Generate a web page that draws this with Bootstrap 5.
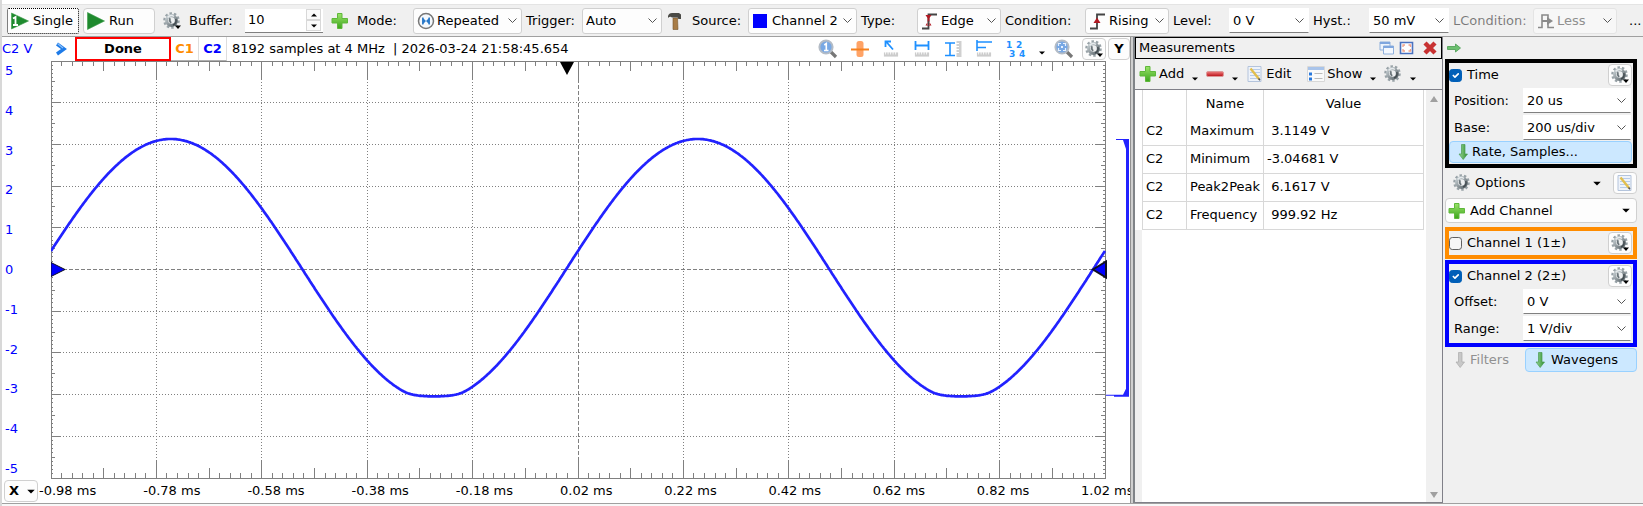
<!DOCTYPE html>
<html lang="en">
<head>
<meta charset="utf-8">
<meta name="viewport" content="width=device-width, initial-scale=1">
<title>Scope</title>
<link href="https://cdn.jsdelivr.net/npm/bootstrap@5.3.0/dist/css/bootstrap.min.css" rel="stylesheet">
<style>
  body { font: 13px/20px Verdana, "DejaVu Sans", sans-serif; color: #000; background: #f0f0f0; }
  svg { display: block; flex: none; }
  .ico { width: 18px; height: 18px; }
  .app { border-left: 2px solid #d8d8d8; }
  .topstrip { height: 5px; background: #fff; border-bottom: 1px solid #e4e4e4; }
  .toolbar { height: 32px; gap: 4px; padding: 0 0 0 5px; border-bottom: 1px solid #a0a0a0; }
  .toolbar > * { flex: none; }
  .cap { width: 52px; }
  .cap-wide { width: 76px; }
  .btn { --bs-btn-padding-x: 4px; --bs-btn-padding-y: 0; --bs-btn-font-size: 13px; --bs-btn-line-height: 20px;
         --bs-btn-border-radius: 4px; --bs-btn-color: #000; display: flex; align-items: center; gap: 4px; white-space: nowrap; }
  .btn-face { --bs-btn-bg: #fdfdfd; --bs-btn-border-color: #d0d0d0; }
  .btn-on { --bs-btn-bg: #cce8ff; --bs-btn-border-color: #99d1ff; }
  .btn-run { width: 72px; height: 26px; --bs-btn-padding-x: 3px; }
  .btn-single { --bs-btn-border-color: #000; --bs-btn-border-radius: 2px; border-style: dotted; }
  .btn:disabled { --bs-btn-disabled-color: #909090; --bs-btn-disabled-opacity: 1; --bs-btn-disabled-border-color: transparent; }
  .btn-sq { width: 24px; height: 22px; padding: 0; justify-content: center; }
  .combo { display: grid; align-items: center; }
  .combo > * { grid-area: 1 / 1; }
  .combo > svg { margin-left: 4px; z-index: 1; pointer-events: none; }
  .form-select { font-size: 13px; line-height: 20px; padding: 0 16px 0 3px; height: 26px; color: #000; border: 1px solid #d0d0d0;
    border-radius: 3px; background-color: #fdfdfd; background-size: 9px 9px; background-position: right 4px center;
    background-image: url("data:image/svg+xml,%3csvg xmlns='http://www.w3.org/2000/svg' viewBox='0 0 9 9'%3e%3cpath d='M0.5 2.5l4 4 4-4' fill='none' stroke='%23555'/%3e%3c/svg%3e"); }
  .with-ico { padding-left: 23px; }
  .flat { border-color: #fff #fff #808080; border-radius: 0; background-color: #fff; height: 25px; }
  .form-select:disabled { color: #909090; background-color: #f7f7f7; border-color: #e4e4e4; }
  .w-l { width: 109px; } .w-m { width: 80px; } .w-s { width: 84px; }
  .spin { width: 78px; height: 24px; background: #fff; border-bottom: 1px solid #808080; }
  .spin input { width: 61px; border: 0; padding: 0 3px; background: none; font-size: 13px; }
  .spin button { width: 15px; height: 11px; padding: 0; border: 1px solid #d8d8d8; background: #fafafa; display: flex; align-items: center; justify-content: center; }
  .plotpane { background: #fff; min-width: 0; }
  .infobar { height: 24px; }
  .blue { color: #00f; }
  .done { width: 96px; height: 24px; border: 2px solid #f00; text-align: center; font-weight: 700; }
  .chip { width: 28px; height: 24px; border: 0; border-right: 1px solid #ddd; border-bottom: 1px solid #b0b0b0; padding: 0; background: #fff; font-weight: 700; }
  .chip-c1 { color: #ff8c00; }
  .status { white-space: pre; padding-left: 5px; }
  .tools { gap: 13px; }
  .tools .drop { align-self: flex-end; margin: 0 -4px 4px 0; }
  .btn-y { width: 22px; margin-left: 2px; font-weight: 700; }
  .ylabels { width: 49px; padding: 0 0 0 3px; }
  .xrow { height: 24px; }
  .xbtn { width: 34px; height: 22px; margin: 0 1px 0 2px; font-weight: 700; }
  .xlabels span { flex: 1 1 0; min-width: 0; white-space: nowrap; }
  .xlabels span:last-child { flex: 0 0 49px; overflow: hidden; }
  #scope { width: 100%; height: 100%; overflow: hidden; }
  .split { width: 3px; background: #d0d0d0; border-left: 1px solid #909090; }
  .measure { width: 310px; border-left: 2px solid #808488; border-right: 1px solid #808088; background: #f0f0f0; }
  .mtitle { height: 22px; border: 1px solid #000; padding: 0 4px 0 3px; }
  .mtools { height: 30px; }
  .mtools .btn { --bs-btn-padding-x: 0; border: 0; gap: 2px; height: 24px; }
  .mbody { border-top: 1px solid #808088; border-bottom: 1px solid #808088; background: #fff; }
  .gutter { width: 7px; background: #f0f0f0; border-top: 140px solid #fff; }
  .table { --bs-table-bg: #fff; --bs-table-color: #000; width: 282px; table-layout: fixed; margin: 0; }
  .table th, .table td { border-color: #d8d8d8; vertical-align: middle; height: 28px; }
  .table th { height: 27px; padding: 0; text-align: center; font-weight: 400; border-width: 0 1px; }
  .table td { padding: 0 3px; border-width: 0 1px 1px; white-space: pre; }
  .table thead, .table tbody { border: 0; }
  .scrollcol { width: 16px; background: #f0f0f0; padding: 6px 0 4px; }
  .side { width: 200px; padding: 0 6px 0 2px; }
  .sidehead { height: 22px; padding-left: 2px; }
  .box { border: 4px solid #000; padding: 0 1px 1px 0; }
  .box-o { border-color: #ff8c00; padding: 0 1px 0 0; margin-bottom: 1px; }
  .box-b { border-color: #00f; margin-bottom: 1px; }
  .form-check-input { width: 13px; height: 13px; margin: 0; border-color: #606060; border-radius: 3px; background-color: #f6f6f6; }
  .form-check-input:checked { background-color: #005fb8; border-color: #005fb8; }
  .headrow { height: 24px; }
  .headrow label { padding-left: 5px; }
  .field { height: 27px; }
  .field label { width: 74px; padding-left: 5px; }
  .field .form-select { width: 108px; }
  .addch { height: 25px; gap: 0; --bs-btn-padding-x: 2px; }
  .filters { height: 24px; padding-left: 10px; gap: 5px; }
  .wavegens { width: 112px; height: 24px; padding-left: 9px; gap: 6px; }
  .foot { height: 3px; background: #f8f8f8; border-top: 1px solid #a0a0a0; }
</style>
</head>
<body>
<svg width="0" height="0" class="position-absolute" aria-hidden="true">
  <defs>
    <linearGradient id="gGreen" x2="0" y2="1"><stop stop-color="#9be36a"/><stop offset="1" stop-color="#3ba51c"/></linearGradient>
    <linearGradient id="gRed" x2="0" y2="1"><stop stop-color="#f08080"/><stop offset="1" stop-color="#b80d14"/></linearGradient>
    <linearGradient id="gGear" x2="1" y2="1"><stop stop-color="#c8d0d4"/><stop offset="1" stop-color="#5c666b"/></linearGradient>
    <linearGradient id="gArrow"><stop stop-color="#9ad89a"/><stop offset="1" stop-color="#2f8f2f"/></linearGradient>
  </defs>
  <symbol id="play" viewBox="0 0 18 18"><path d="M.5 .5L17.500 9L.5 17.500z" fill="#1e8a2e" stroke="#3a9a48" stroke-width=".6"/></symbol>
  <symbol id="single" viewBox="0 0 18 18"><path d="M.5 1L17.500 9L.5 17z" fill="#1e8a2e" stroke="#3a9a48" stroke-width=".6"/><path d="M2 6.500L4.500 5V13M2 13H7" fill="none" stroke="#fff" stroke-width="1.800"/></symbol>
  <symbol id="gear" viewBox="0 0 18 18">
    <circle cx="8.500" cy="8.500" r="7" fill="none" stroke="#98a2a7" stroke-width="2.600" stroke-dasharray="2.400 2"/>
    <circle cx="8.500" cy="8.500" r="4.900" fill="#eef0f1" stroke="url(#gGear)" stroke-width="3.200"/>
    <path d="M4.600 5.500A5 5 0 0 1 11 4.500" fill="none" stroke="#e6eaec" stroke-width="1.400"/>
    <path d="M7 6.200Q6 8.500 8 11" fill="none" stroke="#6b757a" stroke-width="1.800"/>
    <path d="M12.800 7A5 5 0 0 1 10 13" fill="none" stroke="#434b50" stroke-width="1.400"/>
  </symbol>
  <symbol id="geardd" viewBox="0 0 18 18"><use href="#gear" width="18" height="18"/><path d="M12 13.500H18L15 17z"/></symbol>
  <symbol id="plus" viewBox="0 0 18 18"><path d="M6.500 1.500h4.500v5h5.500v4.500h-5.500v5.500h-4.500v-5.500h-5.500v-4.500h5.500z" fill="url(#gGreen)" stroke="#5fb83a"/></symbol>
  <symbol id="minus" viewBox="0 0 18 18"><rect x=".5" y="6.500" width="17" height="5" rx="1.500" fill="url(#gRed)" stroke="#d99"/></symbol>
  <symbol id="rep" viewBox="0 0 18 18"><circle cx="9" cy="9" r="7.500" fill="#f4f8fc" stroke="#777" stroke-width="1.500"/><path d="M5.800 5.500v7M12.200 5.500v7" stroke="#2878c8" stroke-width="1.500"/><path d="M6 6l3 3-3 3zM12 6l-3 3 3 3z" fill="#2878c8"/></symbol>
  <symbol id="hammer" viewBox="0 0 18 18"><path d="M7 6h4.500l.5 11.500h-5z" fill="#a87c46" stroke="#76552c" stroke-width=".6"/><path d="M2 4Q3 .5 7 1H13L15 2.500V7H12.500L11.500 5.500H6Q4 4 2 6z" fill="#4a4a46"/></symbol>
  <symbol id="edge" viewBox="0 0 18 18"><path d="M1 16.500H7.500V2.500H16" fill="none" stroke="#444" stroke-width="1.800"/><path d="M4.500 3h6L7.500 7.500zM4.500 13.500h6L7.500 8.500zM6.500 4h2v9h-2z" fill="#b01822"/></symbol>
  <symbol id="rising" viewBox="0 0 18 18"><path d="M1 16.500H8V2.500H16" fill="none" stroke="#444" stroke-width="1.800"/><path d="M4.500 11L8 5.500 11.500 11z" fill="#b01822"/></symbol>
  <symbol id="less" viewBox="0 0 18 18"><path d="M1 15.500H5V3H11V15.500H17" fill="none" stroke="#8a8a8a" stroke-width="1.600"/><path d="M5 8h5V5l6 4-6 4v-3H5z" fill="#8a8a8a"/></symbol>
  <symbol id="mag" viewBox="0 0 20 20"><path d="M12.500 12.500L18 18" stroke="#777" stroke-width="3.200"/><circle cx="8" cy="8" r="6.600" fill="#78a8e4" stroke="#b4bcc6" stroke-width="2"/></symbol>
  <symbol id="mag1" viewBox="0 0 20 20"><use href="#mag" width="20" height="20"/><path d="M6.300 6L8.300 4.500V11.500M6 11.500H10.500" fill="none" stroke="#fff" stroke-width="1.600"/></symbol>
  <symbol id="magfit" viewBox="0 0 20 20"><use href="#mag" width="20" height="20"/><path d="M4.500 7V4.500H7M9 4.500H11.500V7M11.500 9V11.500H9M7 11.500H4.500V9" fill="none" stroke="#e8f2ff" stroke-width="1.200"/><path d="M7 7h2v2h-2z" fill="#e8f2ff"/></symbol>
  <symbol id="hot" viewBox="0 0 18 18"><rect x="5.500" y="1" width="7" height="16" rx="2.500" fill="#ffa366"/><path d="M0 9.500H18" stroke="#f58220" stroke-width="2"/></symbol>
  <symbol id="ruler" viewBox="0 0 18 6"><rect x=".5" y=".5" width="17" height="5" fill="#ccc"/><path d="M2.500 0v3M5.500 0v3M8.500 0v3M11.500 0v3M14.500 0v3" stroke="#fff"/></symbol>
  <symbol id="curs" viewBox="0 0 18 18"><use href="#ruler" x="1" y="12" width="16" height="5"/><path d="M4 1.500L11 9.500M3.500 7V1.500H9" fill="none" stroke="#1e90ff" stroke-width="1.800"/></symbol>
  <symbol id="hcur" viewBox="0 0 18 18"><use href="#ruler" x="1" y="12" width="16" height="5"/><path d="M2.500 1V10M15.500 1V10M3 5.500H15" fill="none" stroke="#1e90ff" stroke-width="1.800"/></symbol>
  <symbol id="vcur" viewBox="0 0 18 18"><path d="M12.500 1h5v16h-5z" fill="#d0d0d0"/><path d="M12 3.500h3M12 6.500h3M12 9.500h3M12 12.500h3" stroke="#fff"/><path d="M1 3H11M1 15.500H11M6 3V15" fill="none" stroke="#1e90ff" stroke-width="1.600"/></symbol>
  <symbol id="lev" viewBox="0 0 18 18"><use href="#ruler" x="1" y="12" width="16" height="5"/><path d="M2 0V11M2 2H17M2 7.500H11" fill="none" stroke="#1e90ff" stroke-width="1.600"/></symbol>
  <symbol id="caret" viewBox="0 0 6 4"><path d="M0 .5H6L3 3.500z"/></symbol>
  <symbol id="note" viewBox="0 0 18 18"><path d="M2 1.500h13v15h-13z" fill="#eef3fa" stroke="#b4c4dc"/><path d="M4 4.500h10M4 7.500h10M4 10.500h10M4 13.500h10" stroke="#b8cce8"/><path d="M4.500 3.500L13 14" stroke="#e2bf4e" stroke-width="2.400"/><path d="M12.500 13.500l1.500 1.700" stroke="#555" stroke-width="1.500"/></symbol>
  <symbol id="list" viewBox="0 0 18 18"><path d="M.5 1.500h17v15h-17z" fill="#fafafa" stroke="#d8d8d8"/><path d="M1 2h16v3H1z" fill="#a9c4ea"/><path d="M2 7.500h3v3H2zM2 12.500h3v3H2z" fill="#2878dc"/><path d="M7.500 8.500h8M7.500 13.500h8" stroke="#bbb"/></symbol>
  <symbol id="wins" viewBox="0 0 16 14"><path d="M1 1h10v8H1z" fill="#eef4fc" stroke="#8fb0dc"/><path d="M1 1h10v2H1z" fill="#7fa6de"/><path d="M4.500 5h10v8h-10z" fill="#f4f8fe" stroke="#8fb0dc"/><path d="M4.500 5h10v2h-10z" fill="#7fa6de"/></symbol>
  <symbol id="maxi" viewBox="0 0 16 14"><path d="M1.500 1.500h12v11h-12z" fill="#fff" stroke="#4a72c0" stroke-width="1.600"/><path d="M4 6V4h2M9.500 4h2v2M11.500 8v2h-2M6 10H4V8" fill="none" stroke="#f0a088" stroke-width="1.300"/></symbol>
  <symbol id="cross" viewBox="0 0 14 14"><path d="M2 2L12 12M12 2L2 12" stroke="#c83232" stroke-width="4.400"/></symbol>
  <symbol id="right" viewBox="0 0 14 10"><path d="M.5 3.500h8v-2.500l5 4-5 4v-2.500h-8z" fill="#6cc070" stroke="#4a9c50" stroke-width=".8"/></symbol>
  <symbol id="down" viewBox="0 0 10 18"><path d="M3.500 1.500h3.500v9.500h2.500l-4.300 5.500-4.200-5.500h2.500z" fill="url(#gArrow)" stroke="#4a9c50" stroke-width=".7"/></symbol>
  <symbol id="downoff" viewBox="0 0 10 18"><path d="M3.500 1.500h3.500v9.500h2.500l-4.300 5.500-4.200-5.500h2.500z" fill="#c8c8c8" stroke="#aaa" stroke-width=".7"/></symbol>
  <symbol id="chev" viewBox="0 0 12 14"><path d="M2 2L9 7L2 12" fill="none" stroke="#1e7be8" stroke-width="3.400"/><path d="M2.500 1.500L8 6" stroke="#8cc0f8" stroke-width="1.200"/></symbol>
</svg>

<div class="app vh-100 d-flex flex-column overflow-hidden">
  <div class="topstrip flex-shrink-0"></div>
  <header class="toolbar d-flex align-items-center flex-shrink-0 overflow-hidden">
    <button class="btn btn-face btn-run btn-single"><svg class="ico"><use href="#single"/></svg>Single</button>
    <button class="btn btn-face btn-run"><svg class="ico"><use href="#play"/></svg>Run</button>
    <button class="btn p-0 border-0 ms-1" aria-label="Settings"><svg class="ico"><use href="#geardd"/></svg></button>
    <label for="buf" class="cap ms-1">Buffer:</label>
    <div class="spin d-flex align-items-center"><input id="buf" type="text" value="10">
      <div><button aria-label="Up"><svg width="6" height="4" viewBox="0 0 6 4"><path d="M0 3.500H6L3 .5z"/></svg></button><button aria-label="Down"><svg width="6" height="4"><use href="#caret"/></svg></button></div></div>
    <button class="btn p-0 border-0 ms-1 me-1" aria-label="Add"><svg class="ico"><use href="#plus"/></svg></button>
    <label for="mode" class="cap">Mode:</label>
    <div class="combo w-l"><svg class="ico"><use href="#rep"/></svg><select id="mode" class="form-select with-ico"><option>Repeated</option></select></div>
    <label for="trig" class="cap">Trigger:</label>
    <select id="trig" class="form-select w-m"><option>Auto</option></select>
    <button class="btn p-0 border-0 me-1" aria-label="Tools"><svg class="ico"><use href="#hammer"/></svg></button>
    <label for="src" class="cap">Source:</label>
    <div class="combo w-l"><svg width="18" height="18" viewBox="0 0 18 18"><path d="M1 2h14v14H1z" fill="#00f"/></svg><select id="src" class="form-select with-ico"><option>Channel 2</option></select></div>
    <label for="type" class="cap">Type:</label>
    <div class="combo w-s"><svg class="ico"><use href="#edge"/></svg><select id="type" class="form-select with-ico"><option>Edge</option></select></div>
    <label for="cond" class="cap-wide">Condition:</label>
    <div class="combo w-s"><svg class="ico"><use href="#rising"/></svg><select id="cond" class="form-select with-ico"><option>Rising</option></select></div>
    <label for="lvl" class="cap">Level:</label>
    <select id="lvl" class="form-select flat w-m"><option>0 V</option></select>
    <label for="hyst" class="cap">Hyst.:</label>
    <select id="hyst" class="form-select flat w-m"><option>50 mV</option></select>
    <label for="lc" class="cap-wide text-black-50">LCondition:</label>
    <div class="combo w-s"><svg class="ico"><use href="#less"/></svg><select id="lc" class="form-select with-ico" disabled><option>Less</option></select></div>
    <span class="ms-2">...</span>
  </header>

  <main class="d-flex flex-grow-1 overflow-hidden">
    <section class="plotpane d-flex flex-column flex-grow-1">
      <div class="infobar d-flex align-items-center flex-shrink-0">
        <span class="blue ylabels ps-0 ms-0">C2 V</span>
        <button class="btn p-0 border-0 ms-1 me-2" aria-label="Expand"><svg width="12" height="14"><use href="#chev"/></svg></button>
        <div class="done">Done</div>
        <button class="chip chip-c1">C1</button>
        <button class="chip blue">C2</button>
        <span class="status">8192 samples at 4 MHz  | 2026-03-24 21:58:45.654</span>
        <div class="tools d-flex align-items-center ms-auto">
          <svg width="20" height="20"><use href="#mag1"/></svg>
          <svg class="ico"><use href="#hot"/></svg>
          <svg class="ico"><use href="#curs"/></svg>
          <svg class="ico"><use href="#hcur"/></svg>
          <svg class="ico"><use href="#vcur"/></svg>
          <svg class="ico"><use href="#lev"/></svg>
          <svg width="20" height="18" viewBox="0 0 20 18" fill="#1e90ff" font-size="9" font-weight="700"><text x="0" y="8">1</text><text x="10" y="8">2</text><text x="3" y="17">3</text><text x="13" y="17">4</text></svg>
          <svg class="drop" width="6" height="4"><use href="#caret"/></svg>
          <svg width="20" height="20"><use href="#magfit"/></svg>
        </div>
        <button class="btn btn-face btn-sq ms-2" aria-label="Plot settings"><svg class="ico"><use href="#geardd"/></svg></button>
        <button class="btn btn-face btn-sq btn-y">Y</button>
      </div>
      <div class="d-flex flex-grow-1 overflow-hidden">
        <div class="ylabels blue d-flex flex-column justify-content-between flex-shrink-0">
          <span>5</span><span>4</span><span>3</span><span>2</span><span>1</span><span>0</span><span>-1</span><span>-2</span><span>-3</span><span>-4</span><span>-5</span>
        </div>
        <div class="flex-grow-1 overflow-hidden"><svg id="scope" role="img" aria-label="Channel 2 waveform"></svg></div>
      </div>
      <div class="xrow d-flex align-items-center flex-shrink-0">
        <button class="btn btn-face xbtn"><span>X</span><span class="vr"></span><svg width="8" height="5"><use href="#caret"/></svg></button>
        <div class="xlabels d-flex flex-grow-1">
          <span>-0.98 ms</span><span>-0.78 ms</span><span>-0.58 ms</span><span>-0.38 ms</span><span>-0.18 ms</span><span>0.02 ms</span><span>0.22 ms</span><span>0.42 ms</span><span>0.62 ms</span><span>0.82 ms</span><span>1.02 ms</span>
        </div>
      </div>
    </section>
    <div class="split flex-shrink-0"></div>

    <section class="measure d-flex flex-column flex-shrink-0">
      <div class="mtitle d-flex align-items-center">Measurements
        <svg class="ms-auto" width="16" height="14"><use href="#wins"/></svg>
        <svg class="mx-1" width="16" height="14"><use href="#maxi"/></svg>
        <svg class="ms-1" width="14" height="14"><use href="#cross"/></svg>
      </div>
      <div class="mtools d-flex align-items-center">
        <button class="btn ms-1"><svg class="ico"><use href="#plus"/></svg>Add</button>
        <svg class="align-self-end mb-2 ms-2" width="6" height="4"><use href="#caret"/></svg>
        <button class="btn ms-2" aria-label="Remove"><svg class="ico"><use href="#minus"/></svg></button>
        <svg class="align-self-end mb-2 ms-2" width="6" height="4"><use href="#caret"/></svg>
        <button class="btn ms-2"><svg class="ico"><use href="#note"/></svg>Edit</button>
        <button class="btn ms-3"><svg class="ico"><use href="#list"/></svg>Show</button>
        <svg class="align-self-end mb-2 ms-2" width="6" height="4"><use href="#caret"/></svg>
        <button class="btn ms-2" aria-label="Measurement settings"><svg class="ico"><use href="#gear"/></svg></button>
        <svg class="align-self-end mb-2 ms-2" width="6" height="4"><use href="#caret"/></svg>
      </div>
      <div class="mbody d-flex flex-grow-1">
        <div class="gutter"></div>
        <div class="flex-grow-1">
          <table class="table">
            <colgroup><col style="width:44px"><col style="width:77px"><col></colgroup>
            <thead><tr><th></th><th>Name</th><th>Value</th></tr></thead>
            <tbody>
              <tr><td>C2</td><td>Maximum</td><td> 3.1149 V</td></tr>
              <tr><td>C2</td><td>Minimum</td><td>-3.04681 V</td></tr>
              <tr><td>C2</td><td>Peak2Peak</td><td> 6.1617 V</td></tr>
              <tr><td>C2</td><td>Frequency</td><td> 999.92 Hz</td></tr>
            </tbody>
          </table>
        </div>
        <div class="scrollcol d-flex flex-column justify-content-between align-items-center">
          <svg width="8" height="6" viewBox="0 0 8 6"><path d="M0 6L4 0L8 6z" fill="#a0a0a0"/></svg>
          <svg width="8" height="6" viewBox="0 0 8 6"><path d="M0 0L4 6L8 0z" fill="#a0a0a0"/></svg>
        </div>
      </div>
    </section>

    <aside class="side flex-shrink-0">
      <div class="sidehead d-flex align-items-center"><svg width="14" height="10"><use href="#right"/></svg></div>
      <div class="box">
        <div class="headrow d-flex align-items-center"><input class="form-check-input" type="checkbox" id="time" checked><label class="flex-grow-1" for="time">Time</label><button class="btn btn-face btn-sq" aria-label="Time settings"><svg class="ico"><use href="#geardd"/></svg></button></div>
        <div class="field d-flex align-items-center"><label for="pos">Position:</label><select id="pos" class="form-select flat"><option>20 us</option></select></div>
        <div class="field d-flex align-items-center"><label for="base">Base:</label><select id="base" class="form-select flat"><option>200 us/div</option></select></div>
        <button class="btn btn-on w-100 ps-2 py-0"><svg width="10" height="18"><use href="#down"/></svg>Rate, Samples...</button>
      </div>
      <div class="d-flex align-items-center py-1 ps-2">
        <button class="btn p-0 border-0 flex-grow-1 me-2"><svg class="ico"><use href="#gear"/></svg>Options<svg class="ms-auto me-1" width="8" height="5"><use href="#caret"/></svg></button>
        <button class="btn btn-face btn-sq" aria-label="Edit options"><svg class="ico"><use href="#note"/></svg></button>
      </div>
      <button class="btn btn-face w-100 mb-1 addch"><svg class="ico me-1"><use href="#plus"/></svg>Add Channel<svg class="ms-auto me-1" width="8" height="5"><use href="#caret"/></svg></button>
      <div class="box box-o"><div class="headrow d-flex align-items-center"><input class="form-check-input" type="checkbox" id="ch1"><label class="flex-grow-1" for="ch1">Channel 1 (1±)</label><button class="btn btn-face btn-sq" aria-label="Channel 1 settings"><svg class="ico"><use href="#geardd"/></svg></button></div></div>
      <div class="box box-b">
        <div class="headrow d-flex align-items-center"><input class="form-check-input" type="checkbox" id="ch2" checked><label class="flex-grow-1" for="ch2">Channel 2 (2±)</label><button class="btn btn-face btn-sq" aria-label="Channel 2 settings"><svg class="ico"><use href="#geardd"/></svg></button></div>
        <div class="field d-flex align-items-center"><label for="off">Offset:</label><select id="off" class="form-select flat"><option>0 V</option></select></div>
        <div class="field d-flex align-items-center"><label for="rng">Range:</label><select id="rng" class="form-select flat"><option>1 V/div</option></select></div>
      </div>
      <div class="d-flex">
        <button class="btn filters flex-grow-1 border-0" disabled><svg width="10" height="18"><use href="#downoff"/></svg>Filters</button>
        <button class="btn btn-on wavegens"><svg width="10" height="18"><use href="#down"/></svg>Wavegens</button>
      </div>
    </aside>
  </main>
  <footer class="foot flex-shrink-0"></footer>
</div>

<script>
  // Draws the graticule, the channel 2 trace and its histogram to fit the pane.
  const svg = document.getElementById('scope');
  // The negative peak saturates softly at the input limit.
  function sample(phase) {
    const v = 3.13 * Math.sin(phase), s = -v, limit = 3.05, k = .15;
    const t = Math.max(k - Math.abs(s - limit), 0) / k;
    return -(Math.min(s, limit) - t * t * k / 4);
  }
  function draw() {
    const W = svg.clientWidth, H = svg.clientHeight;
    const w = W - 25, h = H - 1, dx = w / 10, dy = h / 10;
    const px = v => Math.floor(v) + .5;
    let ticks = '', dots = '';
    for (let i = 0; i <= 100; i++) {
      const l = i % 10 === 0 ? 18 : i % 5 === 0 ? 10 : 5, x = px(i * dx / 10);
      ticks += `M${x} 0v${l}M${x} ${h}v${-l}`;
      const m = i % 10 === 0 ? 9 : i % 5 === 0 ? 4 : 2, y = px(i * dy / 10);
      ticks += `M0 ${y}h${m}M${w} ${y}h${-m}`;
    }
    for (let i = 1; i < 10; i++) {
      if (i === 5) continue;
      dots += `M${px(i * dx)} 18V${h - 18}M9 ${px(i * dy)}H${w - 9}`;
    }
    const mid = px(h / 2), xz = w / 2 - 12, T = 5 * dx;
    let wave = '';
    for (let x = 0; x <= w; x++) {
      wave += (x ? 'L' : 'M') + x + ' ' + (mid - sample((x - xz) / T * 2 * Math.PI) * dy).toFixed(1);
    }
    const top = mid - 3.13 * dy, bot = mid + 3.05 * dy;
    svg.innerHTML = `
      <g fill="none" stroke="#808080" shape-rendering="crispEdges">
        <path d="M.5 .5H${w + .5}V${h + .5}H.5z"/><path d="${ticks}"/>
        <path d="${dots}" stroke-dasharray="1 2"/>
        <path d="M${px(w / 2)} 0V${h}M0 ${mid}H${w}" stroke-dasharray="4 2"/>
      </g>
      <path d="${wave}" fill="none" stroke="#2222ff" stroke-width="2.700"/>
      <path d="M${xz - 6} 1h14l-7 13z"/>
      <path d="M0 ${mid - 7}L14 ${mid}L0 ${mid + 7}z" fill="#00f" stroke="#112"/>
      <path d="M${w + 1} ${mid - 8}L${w - 12} ${mid}L${w + 1} ${mid + 8}z" fill="#00f" stroke="#112" stroke-width="2"/>
      <path d="M${w + 11} ${top}H${w + 24}V${bot}H${w + 9}V${bot - 1}H${w + 1}V${bot - 2}H${w + 18}L${w + 21} ${bot - 8}V${top + 10}L${w + 18} ${top + 1}H${w + 11}z" fill="#22f"/>`;
  }
  draw();
  new ResizeObserver(draw).observe(svg.parentNode);
</script>
<script src="https://cdn.jsdelivr.net/npm/bootstrap@5.3.0/dist/js/bootstrap.bundle.min.js"></script>
</body>
</html>
